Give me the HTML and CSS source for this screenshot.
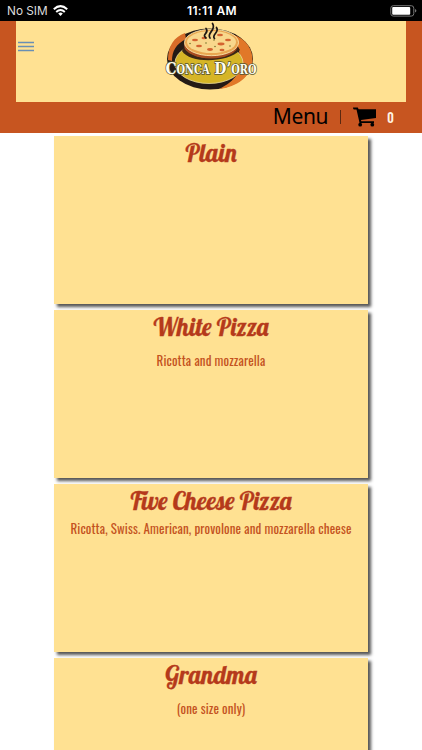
FILE: index.html
```html
<!DOCTYPE html>
<html lang="en">
<head>
    <meta charset="UTF-8">
    <meta name="viewport" content="width=device-width, initial-scale=1.0">
    <title>Conca D'Oro</title>
    <link rel="stylesheet" href="styles.css">
</head>
<body>
    <!-- Status bar -->
    <div class="status-bar">
        <div class="carrier">
            <span>No SIM</span>
            <svg width="15" height="11" viewBox="0 0 15 11" fill="none" stroke="#fff" stroke-width="2">
                <path d="M0.8 4.2Q7.5 -2 14.2 4.2"/>
                <path d="M3.2 6.9Q7.5 3 11.8 6.9"/>
                <path d="M5.2 8.5Q7.5 6.7 9.8 8.5L7.5 11Z" fill="#fff" stroke="none"/>
            </svg>
        </div>
        <div class="time">11:11 AM</div>
        <svg class="battery" width="27" height="12" viewBox="0 0 27 12">
            <rect x="0.8" y="0.7" width="23" height="10.4" rx="2.5" fill="none" stroke="#777"/>
            <rect x="2.2" y="2.1" width="18" height="7.6" rx="1" fill="#fff"/>
            <path d="M25 4v3.6q1.4-.5 1.4-1.8t-1.4-1.8z" fill="#777"/>
        </svg>
    </div>

    <header class="header">
        <div class="banner">
            <svg class="menu-icon" width="16" height="11" viewBox="0 0 16 11" stroke="#688fb5" stroke-width="1.3">
                <path d="M0 1.5h16M0 5.5h16M0 9.5h16"/>
            </svg>
            <!-- Logo -->
            <svg class="logo" width="120" height="81" viewBox="150 21 120 81">
                <ellipse cx="210" cy="59" rx="43" ry="30.5" fill="#241a15"/>
                <path d="M232 34C247 39 253 50 252.500 61C251 77 237 87 219 89C236 81 242 70 240 58C239 48 237 41 232 34Z" fill="#e17828"/>
                <path d="M168 60C168 46 174 37 185 33L186 39C176 44 172 51 172 61Z" fill="#d86c28"/>
                <ellipse cx="209" cy="63" rx="34" ry="20.500" fill="#d6b526" stroke="#eadb9b" stroke-width="0.8"/>
                <path d="M184 47C192 61 225 62 238 47L240 50C228 63 190 64 182 51Z" fill="#3b2715"/>
                <ellipse cx="211" cy="45" rx="27" ry="13.500" fill="#a64b20"/>
                <ellipse cx="211.500" cy="42.500" rx="27" ry="13.200" fill="#e9a650" stroke="#fff0b8" stroke-width="0.8"/>
                <ellipse cx="211.500" cy="42" rx="24.500" ry="11" fill="#f8d78c"/>
                <g fill="#d36330">
                    <ellipse cx="195" cy="40" rx="3" ry="1.300"/>
                    <ellipse cx="204" cy="38" rx="2.500" ry="1.300"/>
                    <ellipse cx="220" cy="35" rx="3" ry="1.300"/>
                    <ellipse cx="228" cy="40" rx="3" ry="1.200"/>
                    <ellipse cx="199" cy="46" rx="3" ry="1.300"/>
                    <ellipse cx="210" cy="49.500" rx="3" ry="1.400"/>
                    <ellipse cx="221" cy="44" rx="3.500" ry="1.400"/>
                    <ellipse cx="222" cy="50" rx="2.500" ry="1.200"/>
                </g>
                <g fill="#78752d">
                    <circle cx="190" cy="43.500" r="0.800"/>
                    <circle cx="206" cy="43" r="0.800"/>
                    <circle cx="214" cy="40" r="0.800"/>
                    <circle cx="230" cy="46" r="0.800"/>
                    <circle cx="215" cy="46.500" r="0.800"/>
                </g>
                <g fill="none" stroke="#1d1713" stroke-width="1.700" stroke-linecap="round">
                    <path d="M206 38C201 34 210 33 206 28.500"/>
                    <path d="M210 38C206 33 217 30 212.500 23.500"/>
                    <path d="M214.500 38.500C211 35 220 32 216.500 27.500"/>
                </g>
                <text class="logo-text" x="165.500" y="73.700" textLength="91" lengthAdjust="spacingAndGlyphs">Conca D’oro</text>
            </svg>
        </div>
        <nav class="nav">
            <span class="nav-title">Menu</span>
            <span class="divider"></span>
            <svg class="cart" width="24" height="20" viewBox="0 0 24 20">
                <path d="M0 0.500H4.800L5.600 2.300H23V11L8 13L8.300 14.300H21V16H6.500L5.900 13L3.500 2.500H0.800Q0 2 0 0.500Z"/>
                <circle cx="7.200" cy="17.700" r="1.900"/>
                <circle cx="19.300" cy="17.700" r="1.900"/>
            </svg>
            <span class="count">0</span>
        </nav>
    </header>

    <main class="items">
        <div class="item">
            <h2>Plain</h2>
        </div>
        <div class="item">
            <h2>White Pizza</h2>
            <p>Ricotta and mozzarella</p>
        </div>
        <div class="item compact">
            <h2>Five Cheese Pizza</h2>
            <p>Ricotta, Swiss. American, provolone and mozzarella cheese</p>
        </div>
        <div class="item">
            <h2>Grandma</h2>
            <p>(one size only)</p>
        </div>
    </main>
</body>
</html>
```
FILE: styles.css
```css
* {
    box-sizing: border-box;
}

body {
    margin: 0;
    height: 750px;
    overflow: hidden;
    background: #fff;
    font-family: Roboto, "Liberation Sans", sans-serif;
}

.status-bar {
    display: grid;
    grid-template-columns: 1fr auto 1fr;
    align-items: center;
    height: 21px;
    padding: 0 5px 0 7px;
    background: #000;
    color: #fff;
    font-family: Inter, sans-serif;
    font-size: 11.8px;
}

.carrier {
    display: flex;
    align-items: center;
    gap: 5px;
    color: #ddd;
}

.time {
    font-size: 12px;
    font-weight: 600;
    letter-spacing: 0.4px;
}

.battery {
    justify-self: end;
}

.header {
    height: 112px;
    padding: 0 16px;
    background: #c75520;
}

.banner {
    display: grid;
    grid-template-columns: 134px 120px 1fr;
    height: 81px;
    background: #ffe192;
}

.menu-icon {
    margin: 20px 0 0 2px;
}

.logo-text {
    font-family: "DejaVu Serif", serif;
    font-size: 17px;
    font-weight: bold;
    font-variant: small-caps;
    fill: #fffdf0;
    stroke: #55532e;
    stroke-width: 1.6px;
    paint-order: stroke;
}

.nav {
    display: flex;
    align-items: center;
    justify-content: flex-end;
    height: 30px;
    padding-right: 12px;
}

.nav-title {
    margin-top: -3px;
    font-family: "Noto Sans", sans-serif;
    font-size: 21px;
    letter-spacing: -0.4px;
    line-height: 30px;
}

.divider {
    width: 1px;
    height: 14px;
    margin: 0 12px;
    background: #5c2810;
}

.count {
    margin: -1px 0 0 10px;
    color: #fff2e2;
    font-family: Oswald, Roboto, sans-serif;
    font-size: 13px;
    font-weight: 500;
}

.items {
    display: flex;
    flex-direction: column;
    gap: 6px;
    width: 314px;
    margin: 3px 0 0 54px;
}

.item {
    flex: none;
    height: 168px;
    background: #ffe192;
    box-shadow: 3px 3px 3px #555;
    text-align: center;
    white-space: nowrap;
}

h2 {
    margin: 0;
    padding-top: 2px;
    color: #b53a1b;
    font-family: Lobster, "Liberation Serif", serif;
    font-size: 24.5px;
    font-weight: normal;
    line-height: 30px;
    -webkit-text-stroke: 0.3px #b53a1b;
}

p {
    margin: 9px 0 0;
    color: #c4531f;
    font-family: Oswald, Roboto, sans-serif;
    font-size: 13px;
    font-weight: 400;
    letter-spacing: 0.12px;
    line-height: 18px;
}

.compact p {
    margin-top: 3px;
}
```
